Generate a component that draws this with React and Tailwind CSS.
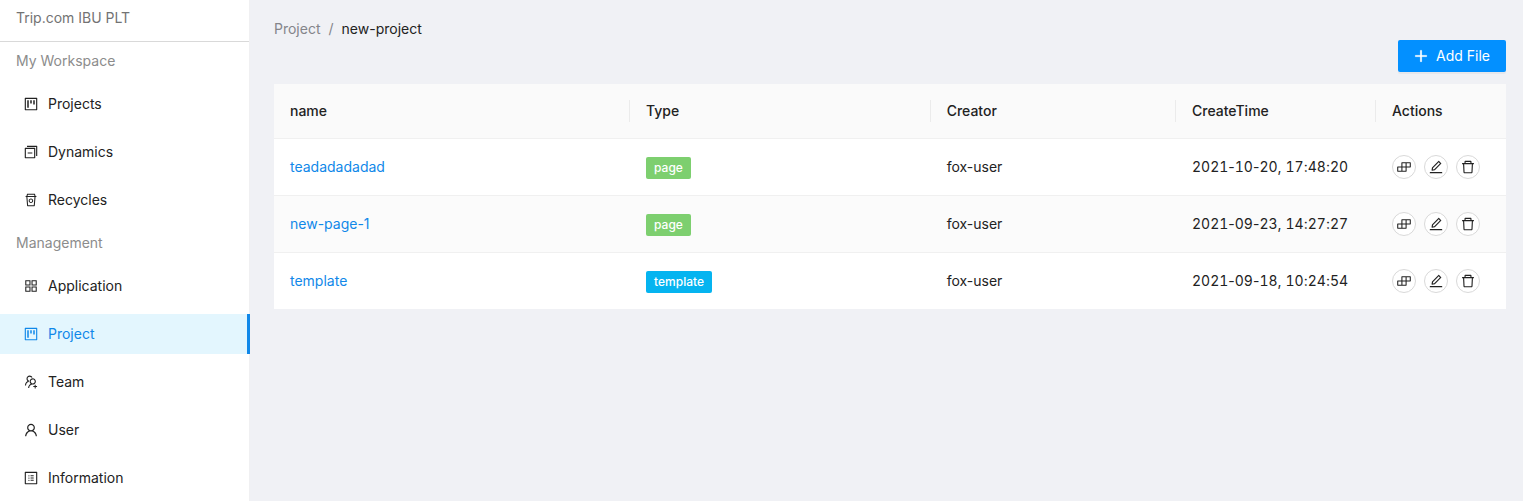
import {
  AiOutlineProject,
  AiOutlineSwitcher,
  AiOutlineRest,
  AiOutlineAppstore,
  AiOutlineUsergroupAdd,
  AiOutlineUser,
  AiOutlineProfile,
  AiOutlineBuild,
  AiOutlineEdit,
  AiOutlineDelete,
  AiOutlinePlus,
} from "react-icons/ai";

const menu = [
  {
    title: "My Workspace",
    items: [
      { label: "Projects", icon: AiOutlineProject },
      { label: "Dynamics", icon: AiOutlineSwitcher },
      { label: "Recycles", icon: AiOutlineRest },
    ],
  },
  {
    title: "Management",
    items: [
      { label: "Application", icon: AiOutlineAppstore },
      { label: "Project", icon: AiOutlineProject, active: true },
      { label: "Team", icon: AiOutlineUsergroupAdd },
      { label: "User", icon: AiOutlineUser },
      { label: "Information", icon: AiOutlineProfile },
    ],
  },
];

const files = [
  { name: "teadadadadad", type: "page", creator: "fox-user", time: "2021-10-20, 17:48:20" },
  { name: "new-page-1", type: "page", creator: "fox-user", time: "2021-09-23, 14:27:27" },
  { name: "template", type: "template", creator: "fox-user", time: "2021-09-18, 10:24:54" },
];

const columns = [
  { label: "name", width: "w-[28.9%]" },
  { label: "Type", width: "w-[24.4%]" },
  { label: "Creator", width: "" },
  { label: "CreateTime", width: "w-[200px]" },
  { label: "Actions", width: "w-[130px]" },
];

const tagColors = { page: "bg-[#7dcf6f]", template: "bg-[#05b4f0]" };

const actions = [
  { label: "Build", icon: AiOutlineBuild },
  { label: "Edit", icon: AiOutlineEdit },
  { label: "Delete", icon: AiOutlineDelete },
];

// The tight view box trims the glyph's built-in margin so it fills 14px.
function Glyph({ icon: Icon, strokeWidth = 0 }) {
  return (
    <Icon
      viewBox="64 64 896 896"
      strokeWidth={strokeWidth}
      className="size-[14px] shrink-0"
    />
  );
}

// Digits are tabular so that rows line up; the separators keep their own width.
function Timestamp({ value }) {
  return (
    <time>
      {value.split(/(\d+)/).map((part, i) =>
        i % 2 ? (
          <span key={i} className="tabular-nums">
            {part}
          </span>
        ) : (
          part
        )
      )}
    </time>
  );
}

function MenuItem({ label, icon, active }) {
  return (
    <li>
      <a
        href="#"
        aria-current={active ? "page" : undefined}
        className={
          active
            ? "-mr-px flex h-10 items-center gap-[10px] border-r-3 border-[#1088e9] bg-[#e3f6fe] pl-6 text-[#1088e9]"
            : "flex h-10 items-center gap-[10px] pl-6"
        }
      >
        <Glyph icon={icon} />
        {label}
      </a>
    </li>
  );
}

function Sidebar() {
  return (
    <aside className="w-[250px] shrink-0 border-r border-[#f0f0f2] bg-white">
      <div className="flex h-[42px] items-start border-b border-[#d9d9d9] px-4 pt-[7px] text-[#737373]">
        Trip.com IBU PLT
      </div>
      <nav className="flex flex-col gap-1">
        {menu.map((group) => (
          <section key={group.title}>
            <h2 className="px-4 py-2 text-[#8c8c8c]">{group.title}</h2>
            <ul className="mt-1 flex flex-col gap-2">
              {group.items.map((item) => (
                <MenuItem key={item.label} {...item} />
              ))}
            </ul>
          </section>
        ))}
      </nav>
    </aside>
  );
}

function FileTable() {
  return (
    <table className="w-full table-fixed border-separate border-spacing-0 bg-white text-left">
      <thead className="bg-[#fafafa]">
        <tr>
          {columns.map((col, i) => (
            <th
              key={col.label}
              scope="col"
              className={`${col.width} border-b border-[#f0f0f0] py-4 font-medium`}
            >
              <div
                className={
                  i < columns.length - 1 ? "border-r border-[#ebebeb] px-4" : "px-4"
                }
              >
                {col.label}
              </div>
            </th>
          ))}
        </tr>
      </thead>
      <tbody className="[&_td]:border-b [&_td]:border-[#f0f0f0] [&_td]:px-4 [&_td]:py-4 [&>tr:last-child>td]:border-b-0">
        {files.map((file) => (
          <tr key={file.name} className="even:bg-[#fbfbfb]">
            <td>
              <a href="#" className="text-[#1088e9]">
                {file.name}
              </a>
            </td>
            <td>
              <span
                className={`${tagColors[file.type]} inline-block rounded-xs px-2 align-middle text-xs leading-[22px] font-medium text-white`}
              >
                {file.type}
              </span>
            </td>
            <td>{file.creator}</td>
            <td>
              <Timestamp value={file.time} />
            </td>
            <td>
              <div className="flex gap-2">
                {actions.map(({ label, icon }) => (
                  <button
                    key={label}
                    type="button"
                    aria-label={`${label} ${file.name}`}
                    className="flex size-6 items-center justify-center rounded-full border border-[#d9d9d9] bg-white"
                  >
                    <Glyph icon={icon} />
                  </button>
                ))}
              </div>
            </td>
          </tr>
        ))}
      </tbody>
    </table>
  );
}

export default function App() {
  return (
    <div className="flex min-h-screen bg-[#f0f1f5] font-['Inter','Liberation_Sans',sans-serif] text-sm leading-[22px] text-[#222222]">
      <Sidebar />
      <main className="min-w-0 flex-1 pt-[18px] pr-[17px] pl-6">
        <nav aria-label="Breadcrumb" className="flex gap-2 text-[#84858a]">
          <a href="#">Project</a>
          <span>/</span>
          <span className="text-[#222222]">new-project</span>
        </nav>
        <div className="mb-3 flex justify-end">
          <button
            type="button"
            className="flex h-8 items-center gap-2 rounded-xs bg-[#0390ff] px-4 text-white shadow-[0_2px_0_rgba(0,0,0,0.04)]"
          >
            <Glyph icon={AiOutlinePlus} strokeWidth={40} />
            Add File
          </button>
        </div>
        <FileTable />
      </main>
    </div>
  );
}
